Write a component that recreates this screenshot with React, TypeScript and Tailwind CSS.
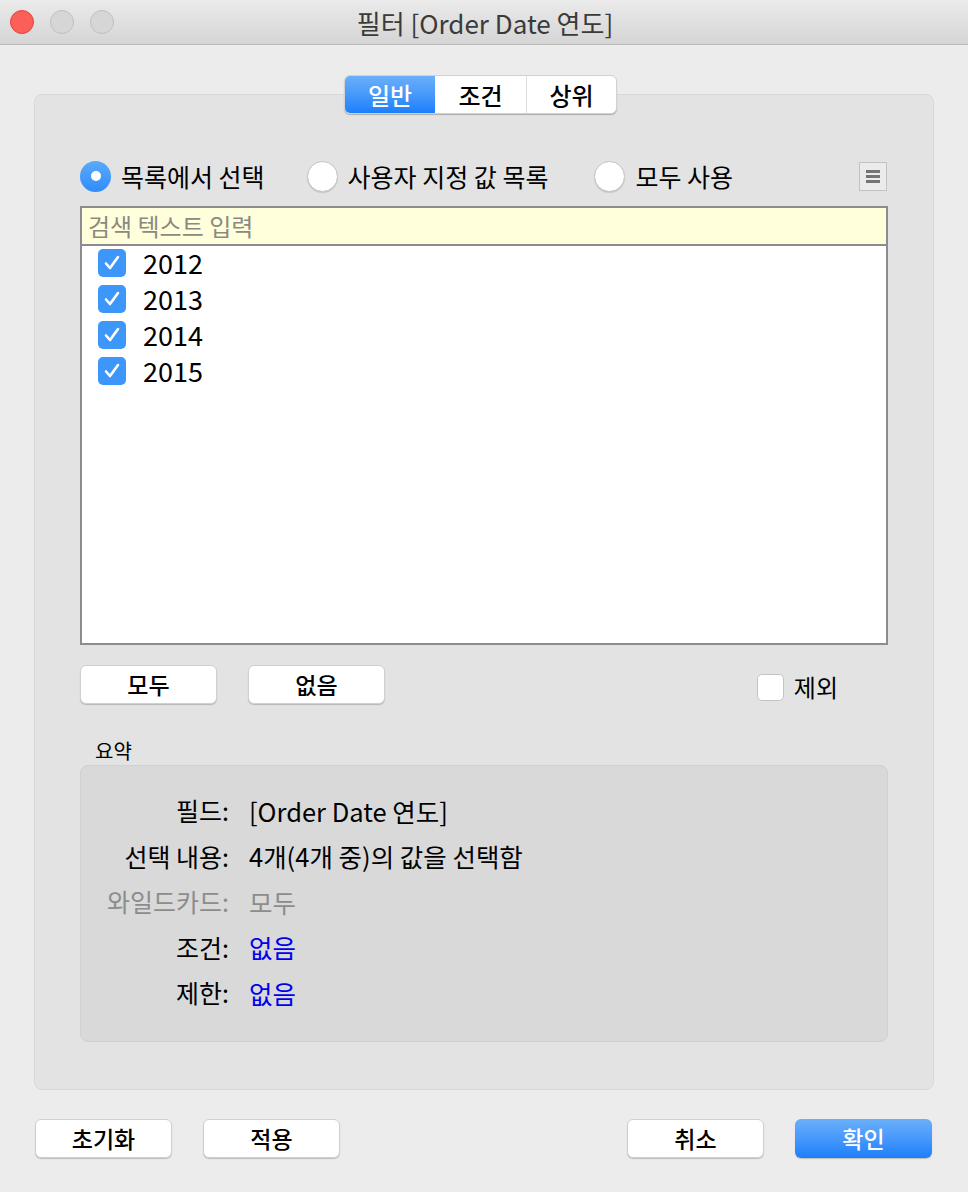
import React from 'react';

const font = { fontFamily: '"Noto Sans CJK KR", "Noto Sans", sans-serif' };

function TrafficLight({ color }: { color: string }) {
  return <div className={`w-[24px] h-[24px] rounded-full border ${color}`} />;
}

function Radio({ checked, label }: { checked?: boolean; label: string }) {
  return (
    <div className="flex items-center gap-[10px]">
      {checked ? (
        <div className="w-[31px] h-[31px] rounded-full bg-gradient-to-b from-[#5aa9fb] to-[#2f8cfb] flex items-center justify-center">
          <div className="w-[10px] h-[10px] rounded-full bg-white" />
        </div>
      ) : (
        <div className="w-[31px] h-[31px] rounded-full bg-white border border-[#c4c4c4] shadow-[0_1px_1px_rgba(0,0,0,0.12)]" />
      )}
      <span className="text-[25px] text-black leading-none">{label}</span>
    </div>
  );
}

function CheckedBox() {
  return (
    <div className="w-[28px] h-[28px] rounded-[5px] bg-[#3d97fb] flex items-center justify-center">
      <svg width="20" height="20" viewBox="0 0 20 20" fill="none">
        <path d="M4 10.5l4 4.5 8-11" stroke="white" strokeWidth="2.6" strokeLinecap="round" strokeLinejoin="round" />
      </svg>
    </div>
  );
}

function Button({ label, primary }: { label: string; primary?: boolean }) {
  return primary ? (
    <button className="w-[137px] h-[39px] rounded-[6px] bg-gradient-to-b from-[#6ab0fa] to-[#1a7ffb] text-white text-[23px] font-medium leading-none shadow-[0_1px_1px_rgba(0,0,0,0.2)]">
      {label}
    </button>
  ) : (
    <button className="w-[137px] h-[39px] rounded-[6px] bg-white border border-[#d0d0d0] text-black text-[23px] font-medium leading-none shadow-[0_1px_1px_rgba(0,0,0,0.2)]">
      {label}
    </button>
  );
}

const years = ['2012', '2013', '2014', '2015'];

const summary = [
  { label: '필드:', value: '[Order Date 연도]', labelCls: 'text-black', valueCls: 'text-black' },
  { label: '선택 내용:', value: '4개(4개 중)의 값을 선택함', labelCls: 'text-black', valueCls: 'text-black' },
  { label: '와일드카드:', value: '모두', labelCls: 'text-[#8c8c8c]', valueCls: 'text-[#8c8c8c]' },
  { label: '조건:', value: '없음', labelCls: 'text-black', valueCls: 'text-[#0000ee]' },
  { label: '제한:', value: '없음', labelCls: 'text-black', valueCls: 'text-[#0000ee]' },
];

export default function App() {
  return (
    <div className="w-[968px] h-[1192px] bg-[#ececec] flex flex-col overflow-hidden" style={font}>
      {/* Title bar */}
      <div className="h-[45px] shrink-0 relative flex items-center bg-gradient-to-b from-[#ebebeb] to-[#d5d5d5] border-b border-[#b9b9b9]">
        <div className="flex items-center gap-[16px] pl-[10px]">
          <TrafficLight color="bg-[#fc5f57] border-[#e0443e]" />
          <TrafficLight color="bg-[#d6d6d6] border-[#c0c0c0]" />
          <TrafficLight color="bg-[#d6d6d6] border-[#c0c0c0]" />
        </div>
        <div className="absolute inset-0 flex items-center justify-center text-[26px] text-[#3a3a3a] pl-[2px]">
          필터 [Order Date 연도]
        </div>
      </div>

      <div className="px-[34px] pt-[30px]">
        {/* Tabs */}
        <div className="relative z-10 flex justify-center pr-[7px]">
          <div className="flex h-[39px] rounded-[6px] bg-white shadow-[0_1px_1px_rgba(0,0,0,0.25)] border border-[#d2d2d2] overflow-hidden">
            <div className="w-[90px] flex items-center justify-center bg-gradient-to-b from-[#6ab0fa] to-[#1a7ffb] text-white text-[24px] font-medium">일반</div>
            <div className="w-[92px] flex items-center justify-center border-r border-[#dcdcdc] text-black text-[24px] font-medium">조건</div>
            <div className="w-[89px] flex items-center justify-center text-black text-[24px] font-medium">상위</div>
          </div>
        </div>

        {/* Main panel */}
        <div className="-mt-[20px] h-[996px] rounded-[8px] bg-[#e3e3e3] border border-[#d8d8d8] px-[45px] pt-[65px]">
          <div className="flex items-center h-[32px]">
            <Radio checked label="목록에서 선택" />
            <div className="ml-[42px]"><Radio label="사용자 지정 값 목록" /></div>
            <div className="ml-[46px]"><Radio label="모두 사용" /></div>
            <div className="ml-auto mr-[1px] w-[28px] h-[29px] border border-[#c2c2c2] bg-[#ebebeb] flex flex-col items-center justify-center gap-[2px]">
              <div className="w-[14px] h-[3px] bg-[#747474]" />
              <div className="w-[14px] h-[3px] bg-[#747474]" />
              <div className="w-[14px] h-[3px] bg-[#747474]" />
            </div>
          </div>

          {/* List box */}
          <div className="mt-[14px] h-[439px] border-2 border-[#8c8c90] bg-white flex flex-col">
            <div className="h-[38px] shrink-0 bg-[#ffffdc] border-b-2 border-[#8c8c90] flex items-center pl-[6px] text-[24px] text-[#8a8a80]">
              검색 텍스트 입력
            </div>
            <div className="flex flex-col pl-[16px] -mt-[1px]">
              {years.map((y) => (
                <div key={y} className="h-[36px] flex items-center gap-[17px]">
                  <CheckedBox />
                  <span className="text-[27px] text-black leading-none -mt-[2px]">{y}</span>
                </div>
              ))}
            </div>
          </div>

          {/* All / None / Exclude */}
          <div className="mt-[18px] flex items-center">
            <Button label="모두" />
            <div className="ml-[31px]"><Button label="없음" /></div>
            <div className="ml-auto mr-[50px] mt-[6px] flex items-center gap-[10px]">
              <div className="w-[27px] h-[27px] rounded-[5px] bg-white border border-[#c4c4c4]" />
              <span className="text-[24px] text-black">제외</span>
            </div>
          </div>

          {/* Summary */}
          <div className="mt-[36px] pl-[15px] text-[20px] text-black leading-none">요약</div>
          <div className="mt-[4px] h-[277px] rounded-[8px] bg-[#d9d9d9] border border-[#d0d0d0] pt-[22px]">
            {summary.map((r) => (
              <div key={r.label} className="h-[45.5px] flex items-center">
                <span className={`w-[148px] text-right text-[25px] ${r.labelCls}`}>{r.label}</span>
                <span className={`ml-[20px] text-[25.5px] ${r.valueCls}`}>{r.value}</span>
              </div>
            ))}
          </div>
        </div>

        {/* Footer buttons */}
        <div className="mt-[29px] flex items-center pl-[1px] pr-[2px]">
          <Button label="초기화" />
          <div className="ml-[31px]"><Button label="적용" /></div>
          <div className="ml-auto"><Button label="취소" /></div>
          <div className="ml-[31px]"><Button label="확인" primary /></div>
        </div>
      </div>
    </div>
  );
}
